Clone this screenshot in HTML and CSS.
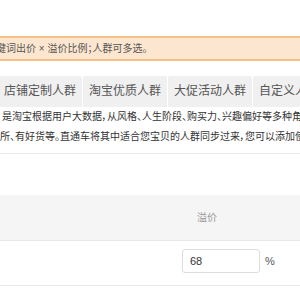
FILE: index.html
```html
<!DOCTYPE html>
<html lang="zh-CN">
<head>
<meta charset="utf-8">
<title>人群溢价</title>
<link rel="stylesheet" href="styles.css">
</head>
<body>
<div class="page">
  <div class="notice"><span class="notice-text">关键词出价 × 溢价比例；人群可多选。</span></div>
  <div class="tabs">
    <div class="tab">店铺定制人群</div>
    <div class="tab">淘宝优质人群</div>
    <div class="tab">大促活动人群</div>
    <div class="tab">自定义人群</div>
  </div>
  <div class="desc">
    <div class="desc-line">是淘宝根据用户大数据，从风格、人生阶段、购买力、兴趣偏好等多种角度</div>
    <div class="desc-line">所、有好货等。直通车将其中适合您宝贝的人群同步过来，您可以添加使用</div>
  </div>
  <div class="table">
    <div class="thead">
      <div class="cell"></div>
      <div class="cell th">溢价</div>
    </div>
    <div class="trow">
      <div class="cell"></div>
      <div class="cell td">
        <input class="premium" type="text" value="68">
        <span class="unit">%</span>
      </div>
    </div>
  </div>
</div>
</body>
</html>
```
FILE: styles.css
```css
html, body {
  margin: 0;
  padding: 0;
  overflow: hidden;
  background: #fff;
}
body {
  font-family: "Liberation Sans", "Noto Sans CJK SC", sans-serif;
  color: #333;
}
.page {
  padding-top: 36px;
}
.notice {
  height: 21px;
  line-height: 21px;
  background: #fde6cf;
  border-top: 2px solid #f6bf85;
  border-bottom: 2px solid #f6bf85;
  font-size: 10px;
  color: #555;
  white-space: nowrap;
  overflow: hidden;
  font-feature-settings: "palt";
}
.notice-text {
  display: inline-block;
  margin-left: -14px;
}
.tabs {
  display: flex;
  gap: 1px;
  margin-top: 15px;
  margin-left: -2px;
  height: 31px;
}
.tab {
  flex-shrink: 0;
  padding: 0 6px;
  background: #f0f0f0;
  border-radius: 2px 2px 0 0;
  line-height: 31px;
  font-size: 12px;
  color: #555;
  white-space: nowrap;
}
.desc {
  padding-bottom: 6px;
  border-bottom: 1px solid #e8e8e8;
  font-size: 10px;
  color: #333;
  font-feature-settings: "palt";
}
.desc-line {
  line-height: 20px;
  white-space: nowrap;
}
.desc-line:first-child {
  padding-left: 2px;
}
.table {
  margin-top: 41px;
}
.thead, .trow {
  display: grid;
  grid-template-columns: 182px 1fr;
  border-bottom: 1px solid #e8e8e8;
}
.thead {
  height: 45px;
  background: #f5f5f5;
}
.trow {
  height: 44px;
}
.th {
  padding-left: 15px;
  line-height: 45px;
  font-size: 10px;
  color: #999;
}
.td {
  display: flex;
  align-items: center;
  padding-top: 8px;
  padding-bottom: 12px;
}
.premium {
  box-sizing: border-box;
  width: 78px;
  height: 24px;
  margin: 0;
  padding: 0 7px;
  border: 1px solid #ddd;
  border-radius: 3px;
  font-family: "Liberation Sans", sans-serif;
  font-size: 11px;
  color: #333;
  outline: none;
}
.unit {
  margin-left: 5px;
  font-size: 11px;
  color: #555;
}
```
